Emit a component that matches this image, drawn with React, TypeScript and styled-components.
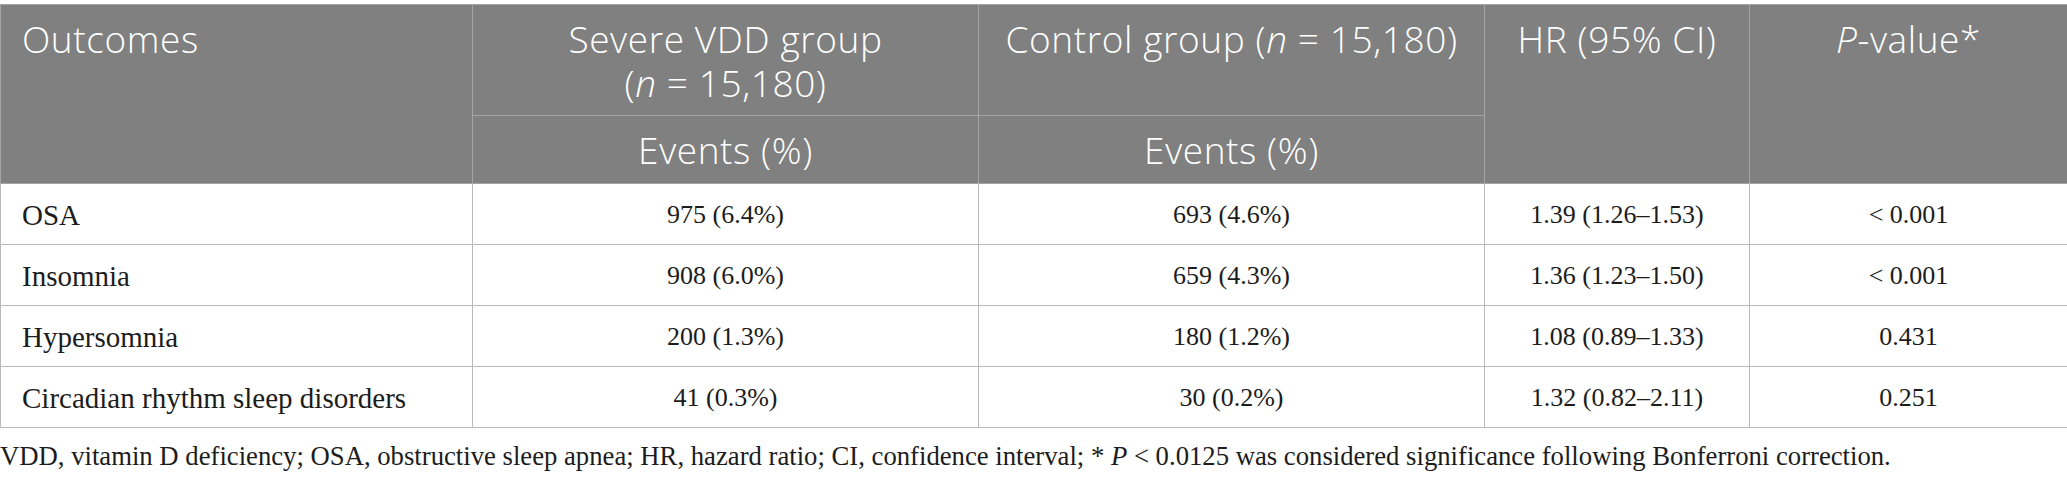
import styled, { createGlobalStyle } from 'styled-components'

const GlobalStyle = createGlobalStyle`
  html, body {
    margin: 0;
    padding: 0;
    background: #ffffff;
  }
`

const Page = styled.div`
  width: 2067px;
  padding-top: 4px;
  box-sizing: border-box;
`

const Table = styled.table`
  width: 2067px;
  border-collapse: collapse;
  table-layout: fixed;
`

const HeadCell = styled.th<{ $align?: 'left' | 'center' }>`
  background: #7f807f;
  color: #ffffff;
  font-family: 'Open Sans', 'Noto Sans', sans-serif;
  font-weight: 300;
  font-size: 37px;
  letter-spacing: 0.6px;
  line-height: 44px;
  text-align: ${(p) => p.$align || 'center'};
  vertical-align: top;
  border: 1px solid #a4a4a4;
  padding: 12px 16px 0 ${(p) => (p.$align === 'left' ? '21px' : '16px')};
  box-sizing: border-box;
  white-space: nowrap;

  i {
    font-style: italic;
  }
`

const HeadLine = styled.span`
  display: block;
  height: 44px;
`

const SubHeadCell = styled(HeadCell)`
  padding-top: 0;
  vertical-align: middle;
`

const HeadRow = styled.tr<{ $height: number }>`
  height: ${(p) => p.$height}px;
`

const Row = styled.tr`
  height: 61px;
`

const Cell = styled.td<{ $label?: boolean }>`
  font-family: 'Liberation Serif', 'Times New Roman', serif;
  font-size: ${(p) => (p.$label ? '29px' : '26px')};
  color: #1c1c1c;
  text-align: ${(p) => (p.$label ? 'left' : 'center')};
  vertical-align: middle;
  border: 1px solid #bababa;
  padding: 2px 10px 0 ${(p) => (p.$label ? '21px' : '10px')};
  white-space: nowrap;
`

const Footnote = styled.p`
  margin: 13px 0 0 0;
  font-family: 'Liberation Serif', 'Times New Roman', serif;
  font-size: 26.7px;
  color: #1c1c1c;
  white-space: nowrap;
`

const rows = [
  ['OSA', '975 (6.4%)', '693 (4.6%)', '1.39 (1.26–1.53)', '< 0.001'],
  ['Insomnia', '908 (6.0%)', '659 (4.3%)', '1.36 (1.23–1.50)', '< 0.001'],
  ['Hypersomnia', '200 (1.3%)', '180 (1.2%)', '1.08 (0.89–1.33)', '0.431'],
  ['Circadian rhythm sleep disorders', '41 (0.3%)', '30 (0.2%)', '1.32 (0.82–2.11)', '0.251'],
]

const App: React.FC = () => {
  return (
    <Page>
      <GlobalStyle />
      <Table>
        <colgroup>
          <col style={{ width: 472 }} />
          <col style={{ width: 506 }} />
          <col style={{ width: 506 }} />
          <col style={{ width: 265 }} />
          <col style={{ width: 318 }} />
        </colgroup>
        <thead>
          <HeadRow $height={111}>
            <HeadCell rowSpan={2} $align="left">
              Outcomes
            </HeadCell>
            <HeadCell>
              <HeadLine>Severe VDD group</HeadLine>
              <HeadLine>
                (<i>n</i> = 15,180)
              </HeadLine>
            </HeadCell>
            <HeadCell>
              Control group (<i>n</i> = 15,180)
            </HeadCell>
            <HeadCell rowSpan={2}>HR (95% CI)</HeadCell>
            <HeadCell rowSpan={2}>
              <i>P</i>-value*
            </HeadCell>
          </HeadRow>
          <HeadRow $height={68}>
            <SubHeadCell>Events (%)</SubHeadCell>
            <SubHeadCell>Events (%)</SubHeadCell>
          </HeadRow>
        </thead>
        <tbody>
          {rows.map((r) => (
            <Row key={r[0]}>
              <Cell $label>{r[0]}</Cell>
              {r.slice(1).map((v, i) => (
                <Cell key={i}>{v}</Cell>
              ))}
            </Row>
          ))}
        </tbody>
      </Table>
      <Footnote>
        VDD, vitamin D deficiency; OSA, obstructive sleep apnea; HR, hazard ratio; CI, confidence
        interval; * <i>P</i> &lt; 0.0125 was considered significance following Bonferroni correction.
      </Footnote>
    </Page>
  )
}

export default App
